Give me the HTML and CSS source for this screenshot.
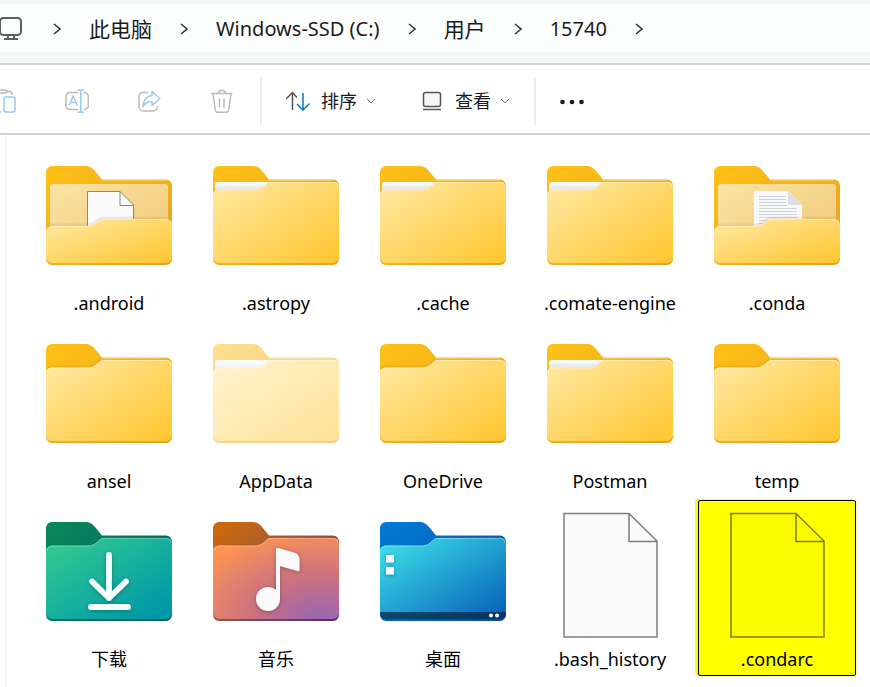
FILE: index.html
```html
<!DOCTYPE html>
<html lang="zh-CN">
<head>
<meta charset="utf-8">
<title>15740</title>
<link rel="stylesheet" href="styles.css">
</head>
<body>
<svg class="sprite" aria-hidden="true">
  <defs>
    <linearGradient id="back" x1="0" y1="0" x2="1" y2="1"><stop offset="0" stop-color="#ffc116"/><stop offset="1" stop-color="#e3a024"/></linearGradient>
    <linearGradient id="front" x1="0" y1="0" x2="1" y2="1"><stop offset="0" stop-color="#ffe9a5"/><stop offset="1" stop-color="#ffc62e"/></linearGradient>
    <linearGradient id="inside" x1="0" y1="0" x2="1" y2="1"><stop offset="0" stop-color="#fbe3a3"/><stop offset="1" stop-color="#efc878"/></linearGradient>
    <linearGradient id="paper" x1="0" y1="0" x2="0" y2="1"><stop offset="0" stop-color="#fff"/><stop offset="1" stop-color="#d5d8dd"/></linearGradient>
    <linearGradient id="down-back" x1="0" y1="0" x2="1" y2="1"><stop offset="0" stop-color="#09885b"/><stop offset="1" stop-color="#04595e"/></linearGradient>
    <linearGradient id="down" x1="0" y1="0" x2=".9" y2=".9"><stop offset="0" stop-color="#36cd8f"/><stop offset="1" stop-color="#0099a8"/></linearGradient>
    <linearGradient id="music-back" x1="0" y1="0" x2="1" y2="1"><stop offset="0" stop-color="#d26b08"/><stop offset=".5" stop-color="#97543f"/><stop offset="1" stop-color="#4c2a7b"/></linearGradient>
    <radialGradient id="music" cx=".85" cy="1" r="1.15"><stop offset="0" stop-color="#9865b4"/><stop offset=".45" stop-color="#cb717f"/><stop offset=".75" stop-color="#e5846b"/><stop offset="1" stop-color="#ff9550"/></radialGradient>
    <linearGradient id="desk-back" x1="0" y1="0" x2="1" y2="1"><stop offset="0" stop-color="#007bd8"/><stop offset="1" stop-color="#0d4a9a"/></linearGradient>
    <linearGradient id="desk" x1="0" y1="0" x2="1" y2="1"><stop offset="0" stop-color="#3ee5ea"/><stop offset="1" stop-color="#065cb8"/></linearGradient>
    <filter id="soft" x="-20%" y="-20%" width="140%" height="140%"><feDropShadow dx="0" dy="1" stdDeviation="2" flood-opacity=".3"/></filter>
    <path id="back-shape" d="M1 17a6 6 0 0 1 6-6H40C45 11 47.500 13 50 16L57 24.500H121a6 6 0 0 1 6 6V104a6 6 0 0 1-6 6H7a6 6 0 0 1-6-6Z"/>
    <path id="front-shape" d="M1 40a5.500 5.500 0 0 1 5.500-5.500H43C50 34.500 52 30 57 27H122a5 5 0 0 1 5 5V102a6 6 0 0 1-6 6H7a6 6 0 0 1-6-6Z"/>
    <path id="open-shape" d="M1 77a6 6 0 0 1 6-6H42C50 71 53 64.500 59 64H121.500a5.500 5.500 0 0 1 5.500 5.500V102a6 6 0 0 1-6 6H7a6 6 0 0 1-6-6Z"/>
    <path id="rim" d="M2 40a5 5 0 0 1 5-5H43C50 35 52 30.500 57 27.500H122a4 4 0 0 1 4 4" fill="none" stroke="#fff"/>
  </defs>
  <symbol id="folder" viewBox="0 0 128 128">
    <use href="#back-shape" fill="url(#back)"/>
    <path d="M57 25H121" stroke="#fbdc7d"/>
    <path d="M2 36Q3 33.500 7 33.500H43C48 33.500 51 30 56 27" fill="none" stroke="#dea21d" stroke-width="2" opacity=".4"/>
    <use href="#front-shape" fill="url(#front)"/>
    <use href="#rim" opacity=".35"/>
  </symbol>
  <symbol id="folder-full" viewBox="0 0 128 128">
    <use href="#back-shape" fill="url(#back)"/>
    <path d="M57 25H121" stroke="#fbdc7d"/>
    <path d="M3 38V30a3 3 0 0 1 3-3H58L45 37Z" fill="url(#paper)"/>
    <use href="#front-shape" fill="url(#front)"/>
    <use href="#rim" opacity=".35"/>
  </symbol>
  <symbol id="open-back" viewBox="0 0 128 128">
    <use href="#back-shape" fill="url(#back)"/>
    <path d="M57 25H121" stroke="#fbdc7d"/>
    <rect x="5" y="29" width="118" height="60" rx="3" fill="url(#inside)"/>
  </symbol>
  <symbol id="open-front" viewBox="0 0 128 128">
    <path d="M5 70H42C50 70 53 63 59 63H123" fill="none" stroke="#a97522" stroke-width="3" opacity=".13"/>
    <use href="#open-shape" fill="url(#front)"/>
    <path d="M2 77a5 5 0 0 1 5-5.500H42C50 71.500 53 65 59 64.500H121a5 5 0 0 1 5 5" fill="none" stroke="#fff" opacity=".35"/>
  </symbol>
  <symbol id="file" viewBox="0 0 128 128">
    <path d="M18 2.500H83L111 30V126H18Z" fill="currentColor" fill-opacity=".02"/>
    <path d="M18 2.500H83L111 30V126H18ZM83 2.500V30.500H111" fill="none" stroke="#000" stroke-opacity=".5" stroke-width="1.500"/>
  </symbol>
  <symbol id="chevron" viewBox="0 0 8 12"><path d="M1 1L7 6L1 11" fill="none" stroke="#333" stroke-width="1.500"/></symbol>
  <symbol id="caret" viewBox="0 0 10 10"><path d="M1 3L5 7L9 3" fill="none" stroke="#777"/></symbol>
</svg>

<header class="address">
  <nav class="crumbs" aria-label="路径">
    <svg class="pc" viewBox="0 0 22 24" fill="none" stroke="#5c5f61" stroke-width="2"><rect x="0" y="1" width="21" height="17" rx="3.500"/><path d="M8 18V22M14 18V22M4 22H18"/></svg>
    <svg class="chevron first"><use href="#chevron"/></svg>
    <a href="#" class="cjk">此电脑</a>
    <svg class="chevron"><use href="#chevron"/></svg>
    <a href="#">Windows-SSD (C:)</a>
    <svg class="chevron"><use href="#chevron"/></svg>
    <a href="#" class="cjk">用户</a>
    <svg class="chevron"><use href="#chevron"/></svg>
    <a href="#">15740</a>
    <svg class="chevron"><use href="#chevron"/></svg>
  </nav>
</header>

<div class="toolbar" role="toolbar">
  <div class="actions">
    <button type="button" aria-label="粘贴" disabled><svg viewBox="0 0 24 24" fill="none" stroke="#bbb" stroke-width="1.500"><rect x="5" y="1" width="10" height="3" rx="1.500"/><path d="M15 2.500H18Q20 2.500 20 6M5 2.500H3Q1 2.500 1 5V21Q1 23 3 23H9"/><rect x="12" y="8" width="11" height="15" rx="2" stroke="#99caf3"/></svg></button>
    <button type="button" aria-label="重命名" disabled><svg viewBox="0 0 24 24" fill="none" stroke="#bbb" stroke-width="1.500"><path d="M13 3.500H4.500A3.500 3.500 0 0 0 1 7V17A3.500 3.500 0 0 0 4.500 20.500H13M18.500 3.500A4.500 4 0 0 1 23.300 8V16A4.500 4 0 0 1 18.500 20.500"/><path d="M12.500 1H19M12.500 23.300H19M15.800 1V23.300M4 16.500L8.200 7L12.400 16.500M5.500 13.500H11" stroke="#99caf3"/></svg></button>
    <button type="button" aria-label="共享" disabled><svg viewBox="0 0 24 24" fill="none" stroke="#bbb" stroke-width="1.500"><path d="M10 3.500H5A4 4 0 0 0 1 7.500V18A4 4 0 0 0 5 22H15.500A4 4 0 0 0 19.500 18V17"/><path d="M14 2.500L22 9.500L14 16.500V12.500Q8.500 12 5 17.500Q6 7 14 6.500Z" stroke="#99caf3" stroke-linejoin="round"/></svg></button>
    <button type="button" aria-label="删除" disabled><svg viewBox="0 0 24 24" fill="none" stroke="#bbb" stroke-width="1.500"><path d="M0 4.500H21.500M2 4.500L4.200 20.500Q4.500 23.300 7 23.300H15Q17.500 23.300 17.800 20.500L20 4.500M7.500 4.500C8 0 14 0 14.500 4.500M8.500 9.500V18.500M13 9.500V18.500"/></svg></button>
  </div>
  <div class="views">
    <button type="button"><svg viewBox="0 0 24 24" fill="none" stroke-width="1.500"><path d="M6.500 21V4M0 10L6.500 3.500L11 8.500" stroke="#555"/><path d="M17 4V21M11 15L17 21L23.500 14.500" stroke="#0078d4"/></svg><span>排序</span><svg class="caret"><use href="#caret"/></svg></button>
    <button type="button"><svg viewBox="0 0 24 24" fill="#f6f6f6" stroke="#555" stroke-width="1.500"><rect x="3.500" y="3.500" width="17" height="14" rx="2"/><path d="M3 20.500H21"/></svg><span>查看</span><svg class="caret"><use href="#caret"/></svg></button>
  </div>
  <button type="button" class="more" aria-label="更多"><svg viewBox="0 0 24 24" fill="#1b1b1b"><circle cx="2.500" cy="13" r="2.300"/><circle cx="12" cy="13" r="2.300"/><circle cx="21.500" cy="13" r="2.300"/></svg></button>
</div>

<main class="files">
  <button type="button" class="item"><svg viewBox="0 0 128 128"><use href="#open-back"/><path d="M42.500 36.500H75L88.500 50V80H42.500Z" fill="#fafafa" stroke="#8e8779"/><path d="M75 36.500V50.500H88.500" fill="none" stroke="#8e8779"/><use href="#open-front"/></svg><span>.android</span></button>
  <button type="button" class="item"><svg><use href="#folder-full"/></svg><span>.astropy</span></button>
  <button type="button" class="item"><svg><use href="#folder-full"/></svg><span>.cache</span></button>
  <button type="button" class="item"><svg><use href="#folder-full"/></svg><span>.comate-engine</span></button>
  <button type="button" class="item"><svg viewBox="0 0 128 128"><use href="#open-back"/><path d="M41 36H75L89 50V80H41Z" fill="#f8f9fa"/><path d="M46 41.500H73M46 44.500H73M46 47.500H73M46 50.500H74M46 53.500H84M46 56.500H84M46 59.500H84M46 62.500H84M46 65.500H60M46 68.500H54" stroke="#cfd1d3"/><path d="M75 36L89 50H75Z" fill="#dedfe0"/><use href="#open-front"/></svg><span>.conda</span></button>

  <button type="button" class="item"><svg><use href="#folder"/></svg><span>ansel</span></button>
  <button type="button" class="item hidden-item"><svg><use href="#folder-full"/></svg><span>AppData</span></button>
  <button type="button" class="item"><svg><use href="#folder"/></svg><span>OneDrive</span></button>
  <button type="button" class="item"><svg><use href="#folder-full"/></svg><span>Postman</span></button>
  <button type="button" class="item"><svg><use href="#folder"/></svg><span>temp</span></button>

  <button type="button" class="item"><svg viewBox="0 0 128 128"><use href="#back-shape" fill="url(#down-back)"/><use href="#front-shape" fill="url(#down)"/><use href="#rim" opacity=".3"/><g fill="none" stroke="#f4fffd" stroke-width="5.800" stroke-linecap="round" stroke-linejoin="round" filter="url(#soft)"><path d="M64 44V87M47 70.500L64 87L81 70.500M46 96H83"/></g></svg><span>下载</span></button>
  <button type="button" class="item"><svg viewBox="0 0 128 128"><use href="#back-shape" fill="url(#music-back)"/><use href="#front-shape" fill="url(#music)"/><use href="#rim" opacity=".25"/><path d="M64 38Q64 36.500 66 37L82 41.500Q87.500 43 87.500 49V59Q87.500 60.500 85.500 60L68 55V88A12 12 0 1 1 64 79Z" fill="#fafafa" filter="url(#soft)"/></svg><span>音乐</span></button>
  <button type="button" class="item"><svg viewBox="0 0 128 128"><use href="#back-shape" fill="url(#desk-back)"/><use href="#front-shape" fill="url(#desk)"/><path d="M1 101H127V103Q126 108 121 108H7Q2 108 1 103Z" fill="#04284a" opacity=".75"/><use href="#rim" opacity=".35"/><path d="M7 44H15V51.500H7ZM7 56H15V63.500H7Z" fill="#f4faff" filter="url(#soft)"/><circle cx="112" cy="104.500" r="2" fill="#fff"/><circle cx="118" cy="104.500" r="2" fill="#fff"/></svg><span>桌面</span></button>
  <button type="button" class="item"><svg><use href="#file"/></svg><span>.bash_history</span></button>
  <button type="button" class="item selected"><svg><use href="#file"/></svg><span>.condarc</span></button>
</main>
</body>
</html>
```
FILE: styles.css
```css
* { box-sizing: border-box; }

body {
  margin: 0;
  min-height: 100vh;
  display: flex;
  flex-direction: column;
  background: #fff;
  color: #000;
  font: 18px/24px "Noto Sans", "Noto Sans CJK SC", sans-serif;
  overflow: hidden;
}

.sprite { position: absolute; width: 0; height: 0; }

button {
  border: 0;
  padding: 0;
  background: none;
  color: inherit;
  font: inherit;
}

svg { display: block; flex: none; }

.address {
  padding: 4px 0 11px;
  background: #f5f7f7;
  border-bottom: 2px solid #cdd2d5;
}

.crumbs {
  display: flex;
  align-items: center;
  gap: 28px;
  height: 48px;
  padding-top: 2px;
  background: #fcfefd;
}

.crumbs a {
  color: #1b1b1b;
  text-decoration: none;
  white-space: nowrap;
  font-size: 20px;
}

.crumbs .cjk { font-size: 21px; }
.pc { width: 22px; height: 24px; }
.chevron { width: 8px; height: 12px; }
.first { margin-left: 3px; }

.toolbar {
  display: flex;
  align-items: center;
  height: 70px;
  padding-top: 4px;
  border-bottom: 2px solid #cdd2d5;
}

.toolbar svg { width: 24px; height: 24px; }

.actions {
  display: flex;
  gap: 49px;
  margin-left: -8px;
  padding-right: 25px;
}

.views {
  display: flex;
  align-items: center;
  gap: 44px;
  height: 48px;
  padding: 0 24px;
  border: solid #ececec;
  border-width: 0 2px;
}

.views button {
  display: flex;
  align-items: center;
  gap: 11px;
  color: #1b1b1b;
}

.toolbar .caret { width: 10px; height: 10px; margin-left: -2px; }
.more { margin-left: 24px; }

.files {
  flex: 1;
  display: grid;
  grid-template-columns: repeat(auto-fill, 158px);
  grid-auto-rows: 176px;
  gap: 2px 9px;
  margin-left: 5px;
  padding: 9px 0 11px 23px;
  border-left: 2px solid #f5f5f5;
}

.item {
  display: flex;
  flex-direction: column;
  align-items: center;
  justify-content: flex-start;
  gap: 8px;
  padding-top: 10px;
  border: 1px solid transparent;
  border-radius: 2px;
}

.item svg { width: 128px; height: 128px; }
.hidden-item svg { opacity: .5; }

.selected {
  background: #ff0;
  border-color: #000;
  box-shadow: -3px -1px 0 #ff0;
}
```
